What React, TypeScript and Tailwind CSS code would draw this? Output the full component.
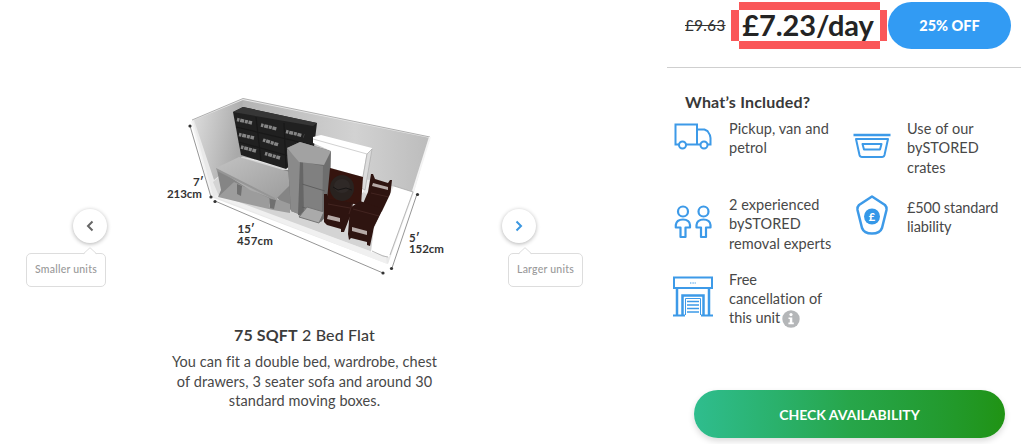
import type { ReactNode } from "react";

function StorageUnit() {
  return (
    <svg viewBox="160 85 290 195" className="h-[195px] w-[290px] shrink-0" fontFamily="Lato, sans-serif">
      <defs>
        <linearGradient id="leftWall" x1="0" x2="1" y1="0" y2="0.3">
          <stop offset="0" stopColor="#dedede" />
          <stop offset="1" stopColor="#a9a9a9" />
        </linearGradient>
        <linearGradient id="backWall" x1="0" x2="1" y1="0" y2="0">
          <stop offset="0" stopColor="#b4b4b4" />
          <stop offset="0.6" stopColor="#d2d2d2" />
          <stop offset="1" stopColor="#bcbcbc" />
        </linearGradient>
        <linearGradient id="sofaTop" x1="0" x2="1" y1="0" y2="1">
          <stop offset="0" stopColor="#c2c2c2" />
          <stop offset="1" stopColor="#9c9c9c" />
        </linearGradient>
      </defs>
      <path d="M192 120 243 98.500 430 137 414 192 388 264 211 197Z" fill="#e9e9e9" />
      <path d="M194 120 243 100 242 157 214 180Z" fill="url(#leftWall)" />
      <path d="M243 100 430 138 412 193 380 182 242 157Z" fill="url(#backWall)" />
      <path d="M192 120 243 98.500 430 137" fill="none" stroke="#b0b0b0" strokeWidth="1" />
      <path d="M430 137 413 191" fill="none" stroke="#f4f4f4" strokeWidth="2" />
      <path d="M213 182 242 157 360 190 392 210 384 256 219 196Z" fill="#d4d4d4" />
      <path d="M213 196 220 195 386 257 387 264Z" fill="#f0f0f0" />
      <path d="M192 121 212 196" fill="none" stroke="#f3f3f3" strokeWidth="2" />

      <path d="M233 112 243 107 317 123 314 147 286 169 241 155Z" fill="#202020" />
      <path d="M233 112 243 107 317 123 313 126Z" fill="#363636" />
      <path d="M256 117 261 161M284 123 286 168M236 127 312 145M239 142 289 156" stroke="#181818" strokeWidth="1.200" />
      <g stroke="#858585" strokeWidth="3.400" strokeDasharray="2.500 0.800 4 0.800 3 0.700 4">
        <path d="M237 119.500 252 123M261 125 277 129M286 131.500 304 136" />
        <path d="M239 134.500 254 138M263 140 279 145M241 147 256 151M265 153.500 280 158" />
      </g>

      <path d="M217 170 221 190 218 197 232 188 238 196 242 188 268 200 271 209 277 198 292 211 294 170Z" fill="#858585" />
      <path d="M218 197 234 182 269 198 270 208 274 198 290 204 290 213 273 210Z" fill="#9c9c9c" />
      <path d="M216 168 239 157 290 172 290 185 275 200 250 190Z" fill="url(#sofaTop)" />
      <path d="M216 168 275 198 275 200 217 171Z" fill="#969696" />
      <path d="M237 184 242 186 241 196 237 194ZM270 199 276 200 274 209 270 208Z" fill="#707070" />

      <path d="M287 148 300 142 331 151 329 213 321 222 291 211Z" fill="#6e6e6e" />
      <path d="M303 162 323 166 322 218 302 211Z" fill="#808080" />
      <path d="M287 149 300 160 303 216 291 211Z" fill="#8a8a8a" />
      <path d="M300 160 303 161 304 217 298 215Z" fill="#666" />
      <path d="M287 148 300 142 331 151 324 165 299 162Z" fill="#a2a2a2" />
      <path d="M302 184 325 191M302 207 323 214" stroke="#5f5f5f" strokeWidth="1" />
      <path d="M299 217 307 207 324 212 319 223Z" fill="#aaa" stroke="#747474" strokeWidth="1" />

      <path d="M313 137 321 135 372 148 363 193 358 190 363 177 331 168 331 151 313 143Z" fill="#fff" />
      <path d="M313 139 367 154 363 177" fill="none" stroke="#d2d2d2" strokeWidth="1" />
      <path d="M367 154 372 149 365 190 361 188Z" fill="#ddd" stroke="#aaa" strokeWidth="0.700" />
      <path d="M330 168 363 177 361 205 327 200Z" fill="#35140e" />
      <ellipse cx="342" cy="188" rx="12" ry="13" fill="#29221f" />
      <ellipse cx="342" cy="186" rx="8" ry="7" fill="#2f2927" />
      <path d="M333 187 338 190 346 188 352 190" fill="none" stroke="#171515" />
      <g fill="#2e1410">
        <path d="M371 174 373 174 375 179 388 183 390 180 392 180 390 198 383 212 362 206 368 192Z" />
        <path d="M324 194 327 194 329 199 353 203 351 214 344 232 341 232 341 229 327 225 324 222Z" />
        <path d="M350 208 360 201 383 209 374 227 370 246 367 245 367 242 351 238 349 240 348 234Z" />
      </g>
      <path d="M373 183 388 187 388 190 372 186ZM328 215 340 218 340 222 327 219ZM352 227 367 231 367 235 352 231Z" fill="#b6aaa7" />
      <path d="M328 204 350 208M353 209 379 216M371 193 389 197M352 204 349 214" stroke="#4b2b26" strokeWidth="0.700" />
      <path d="M394 186 413 192 389 257 371 252 374 228Z" fill="#fff" />
      <path d="M394 186 413 192 390 255M372 251 383 256 388 257" fill="none" stroke="#aaa" strokeWidth="0.800" />

      <g fill="none" stroke="#969696" strokeWidth="1">
        <path d="M190 126 211 197M215 201 383 273M392 268 417 194" />
      </g>
      <g fill="#333">
        <circle cx="190" cy="126" r="1.600" />
        <circle cx="211" cy="197" r="1.600" />
        <circle cx="215" cy="201.500" r="1.600" />
        <circle cx="383" cy="273" r="1.600" />
        <circle cx="391.500" cy="268.500" r="1.600" />
        <circle cx="417.500" cy="194.500" r="1.600" />
      </g>
      <g fill="#333" fontSize="11.500" fontWeight="700">
        <text x="193" y="186">7′</text>
        <text x="167" y="197.500" textLength="35">213cm</text>
        <text x="237.500" y="233">15′</text>
        <text x="237" y="244.500" textLength="36">457cm</text>
        <text x="409" y="241.500">5′</text>
        <text x="409" y="253" textLength="35">152cm</text>
      </g>
    </svg>
  );
}

function UnitNav({ label, next = false }: { label: string; next?: boolean }) {
  return (
    <div className={next ? "flex w-[75px] flex-col" : "flex w-[80px] flex-col items-center"}>
      <button
        className={
          next
            ? "-ml-[6px] flex size-[34px] items-center justify-center rounded-full bg-white shadow-[0_1px_4px_rgba(0,0,0,0.3)]"
            : "ml-[47px] mr-0 flex size-[34px] items-center justify-center self-start rounded-full bg-white shadow-[0_1px_4px_rgba(0,0,0,0.3)]"
        }
      >
        <svg viewBox="0 0 10 12" className={next ? "h-3 w-2.5 text-[#3b97e0]" : "h-3 w-2.5 text-[#666]"} fill="none" stroke="currentColor" strokeWidth="2">
          <path d={next ? "M2.500 1.500 7 6 2.500 10.500" : "M7.500 1.500 3 6 7.500 10.500"} />
        </svg>
      </button>
      <div className="relative mt-[10px] flex h-[34px] w-full items-center justify-center rounded-[5px] border border-[#ddd] bg-white">
        <svg viewBox="0 0 14 8" className={next ? "absolute -top-[7px] left-[9px] h-2 w-3.5" : "absolute -top-[7px] left-[56px] h-2 w-3.5"}>
          <path d="M1 7 7 1 13 7V8H1Z" fill="#fff" />
          <path d="M0.500 6.700 7 0.700 13.500 6.700" fill="none" stroke="#ddd" />
        </svg>
        <span className="text-[10.500px] font-medium tracking-[0.22px] whitespace-nowrap text-[#999]">{label}</span>
      </div>
    </div>
  );
}

const iconProps = { fill: "none", stroke: "#3d9ae8", strokeWidth: 2 };

function VanIcon() {
  return (
    <svg viewBox="0 0 38 27" className="h-[27px] w-[38px]" {...iconProps}>
      <path d="M5 21.500H1.500V1.500H23V21.500H12M23 6.500H30.500L33.500 8Q36.500 12 36.500 15V21.500H34M27 21.500H22.500" />
      <circle cx="8.500" cy="22" r="3.500" />
      <circle cx="30" cy="22" r="3.500" />
    </svg>
  );
}

function CrateIcon() {
  return (
    <svg viewBox="0 0 38 26" className="h-[26px] w-[38px]" {...iconProps}>
      <path d="M0.500 2H37.500" strokeWidth="2.500" />
      <path d="M3 6H35L31.500 22Q31 24 29 24H9Q7 24 6.500 22Z" strokeLinejoin="round" />
      <path d="M9.500 11H28.500L27 16.500H11Z" strokeLinejoin="round" />
    </svg>
  );
}

function PeopleIcon() {
  return (
    <svg viewBox="0 0 38 34" className="h-[34px] w-[38px]" {...iconProps} strokeWidth={2.2} strokeLinejoin="round">
      <circle cx="9" cy="6.500" r="5" />
      <path d="M6.500 22.500H1.800V20Q2.500 14.500 9 14.500T16 20V22.500H11.500V32H6.500Z" />
      <circle cx="29.500" cy="6.500" r="5" />
      <path d="M27 22.500H22.500V20Q23 14.500 29.500 14.500T36.500 20V22.500H32V32H27Z" />
    </svg>
  );
}

function LiabilityIcon() {
  return (
    <svg viewBox="0 0 34 40" className="h-[40px] w-[34px]" {...iconProps} strokeWidth={2.5}>
      <path d="M17 1.500 30 10Q32 12 31.500 15L27 33Q25 38.500 17 38.500T7 33L2.500 15Q2 12 4 10Z" strokeLinejoin="round" />
      <circle cx="17" cy="21.500" r="8" fill="#3598e8" stroke="none" />
      <text x="17" y="25.500" textAnchor="middle" fontFamily="Lato, sans-serif" fontSize="11" fontWeight="900" fill="#fff" stroke="none">£</text>
    </svg>
  );
}

function GarageIcon() {
  return (
    <svg viewBox="0 0 40 41" className="h-[41px] w-[40px]" {...iconProps}>
      <path d="M1 1.500H39V12H1Z" />
      <path d="M4 12V39M36 12V39M9.500 39V19.500H30.500V39" strokeWidth="2.500" />
      <path d="M12.500 39V22.500H27.500V39" strokeWidth="1" />
      <path d="M0 39.500H12M28 39.500H40" />
      <path d="M14 25.500H26M14 29H26M14 32.500H26M14 36H26" strokeWidth="1.300" />
      <path d="M17 7H23" strokeWidth="1.200" strokeDasharray="1 0.600" />
    </svg>
  );
}

function Feature({ icon, children, className }: { icon: ReactNode; children: ReactNode; className: string }) {
  return (
    <div className={className}>
      {icon}
      <p className="whitespace-nowrap">{children}</p>
    </div>
  );
}

export default function App() {
  return (
    <main className="flex h-[444px] w-[1023px] overflow-hidden bg-white font-['Lato',sans-serif] text-[#484848]">
      <section className="flex w-[609px] shrink-0 flex-col items-center pt-[85px]">
        <div className="flex w-full pl-[26px]">
          <div className="w-[134px] pt-[124px]">
            <UnitNav label="Smaller units" />
          </div>
          <StorageUnit />
          <div className="ml-[58px] pt-[124px]">
            <UnitNav label="Larger units" next />
          </div>
        </div>
        <h2 className="mt-[38px] text-[16px] leading-5 font-medium tracking-[0.15px] whitespace-nowrap text-[#3c3c3c]">
          <span className="font-bold">75 SQFT</span> 2 Bed Flat
        </h2>
        <p className="mt-[7px] text-center text-[14.500px] leading-[19.500px] tracking-[0.09px] whitespace-nowrap">
          You can fit a double bed, wardrobe, chest
          <br />
          of drawers, 3 seater sofa and around 30
          <br />
          standard moving boxes.
        </p>
      </section>

      <aside className="ml-[58px] flex w-[354px] flex-col">
        <div className="flex h-[68px] items-start border-b border-[#cfcfcf] pl-[18px]">
          <span className="mt-[15px] w-[46px] text-[15px] leading-5 font-medium tracking-[0.45px] whitespace-nowrap text-[#333] line-through">£9.63</span>
          <div className="mt-[2px] grid h-[47px] w-[156px] grid-cols-[8px_1fr_7px] grid-rows-[8px_31px_8px]">
            <div className="col-start-2 bg-[#fa5759]" />
            <div className="col-start-1 row-start-2 bg-[#fa5759]" />
            <div className="col-start-2 row-start-2 pr-[3px] text-center text-[29px] leading-[29px] font-bold tracking-[-0.1px] whitespace-nowrap text-[#242424]">£7.23/day</div>
            <div className="col-start-3 row-start-2 bg-[#fa5759]" />
            <div className="col-start-2 row-start-3 bg-[#fa5759]" />
          </div>
          <div className="mt-[2px] ml-[1px] flex h-[47px] w-[123px] items-center justify-center rounded-full bg-[#329bf3] text-[14.500px] font-black text-white">25% OFF</div>
        </div>

        <h3 className="mt-[24px] ml-[18px] text-[16px] leading-5 font-bold tracking-[0.2px] text-[#383838]">What’s Included?</h3>
        <div className="mt-[7px] grid grid-cols-[179px_1fr] grid-rows-[76px_76px_76px] pl-[7px] text-[14.500px] leading-[19.300px] tracking-[0.05px]">
          <Feature className="grid grid-cols-[55px_1fr] items-start [&>svg]:mt-[4px]" icon={<VanIcon />}>
            Pickup, van and
            <br />
            petrol
          </Feature>
          <Feature className="grid grid-cols-[54px_1fr] items-start [&>svg]:mt-[14px]" icon={<CrateIcon />}>
            Use of our
            <br />
            bySTORED
            <br />
            crates
          </Feature>
          <Feature className="grid grid-cols-[55px_1fr] items-start [&>svg]:mt-[10px]" icon={<PeopleIcon />}>
            2 experienced
            <br />
            bySTORED
            <br />
            removal experts
          </Feature>
          <Feature className="grid grid-cols-[54px_1fr] items-start pt-[3px] tracking-[-0.1px] [&>svg]:-mt-[3px] [&>svg]:ml-[2px]" icon={<LiabilityIcon />}>
            £500 standard
            <br />
            liability
          </Feature>
          <Feature className="-mt-px grid grid-cols-[55px_1fr] items-start [&>svg]:mt-[6px] [&>svg]:-ml-px" icon={<GarageIcon />}>
            Free
            <br />
            cancellation of
            <br />
            <span className="flex h-[19px] items-center gap-[2px] tracking-[-0.05px]">
              this unit
              <svg viewBox="0 0 18 18" className="mt-[2px] size-[18px]">
                <circle cx="9" cy="9" r="8.700" fill="#b4b6b8" />
                <circle cx="9" cy="4.600" r="1.600" fill="#fff" />
                <path d="M6.500 7.500H10.300V12.600H11.800V14.200H6.400V12.600H7.800V9H6.500Z" fill="#fff" />
              </svg>
            </span>
          </Feature>
        </div>
        <button className="mt-[43px] ml-[27px] h-[48px] w-[311px] shrink-0 rounded-full bg-linear-to-r from-[#2fbd8e] via-[#27a64a] to-[#209313] text-[14px] font-bold text-white shadow-[0_3px_6px_rgba(0,0,0,0.15)]">
          CHECK AVAILABILITY
        </button>
      </aside>
    </main>
  );
}
